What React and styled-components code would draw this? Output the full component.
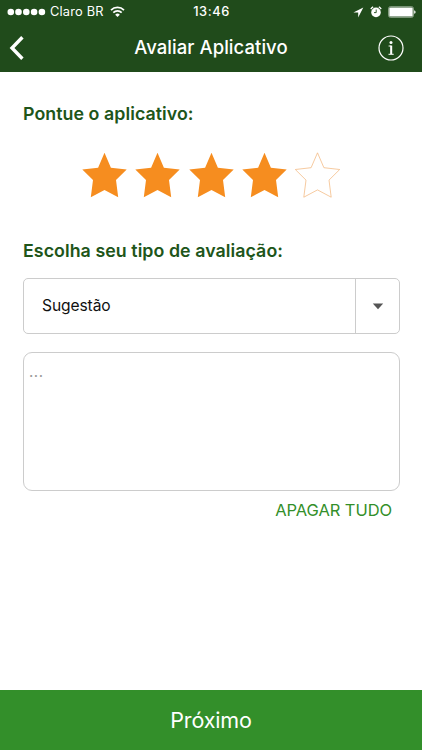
import React, { useState } from 'react';
import styled, { createGlobalStyle } from 'styled-components';

const GlobalStyle = createGlobalStyle`
  * {
    box-sizing: border-box;
  }

  body {
    margin: 0;
    background-color: #ffffff;
    font-family: Inter, 'Liberation Sans', sans-serif;
  }

  button {
    border: none;
    padding: 0;
    background: none;
    font-family: inherit;
  }
`;

const Screen = styled.div`
  width: 422px;
  height: 750px;
  display: flex;
  flex-direction: column;
  background-color: #ffffff;
  overflow: hidden;
`;

const Header = styled.header`
  height: 72px;
  flex-shrink: 0;
  background-color: #204b1b;
  color: #ffffff;
`;

const StatusBar = styled.div`
  height: 24px;
  display: grid;
  grid-template-columns: 1fr auto 1fr;
  align-items: center;
  padding: 0 6px 0 7px;
  line-height: 24px;
`;

const StatusSide = styled.div`
  display: flex;
  align-items: center;
  justify-content: ${({ $end }) => ($end ? 'flex-end' : 'flex-start')};
  gap: ${({ $end }) => ($end ? '6px' : '4px')};

  svg {
    display: block;
    flex-shrink: 0;
  }
`;

const Carrier = styled.span`
  margin-right: 2px;
  font-size: 12.8px;
  letter-spacing: 0.2px;
  white-space: nowrap;
`;

const Clock = styled.span`
  font-size: 12.8px;
  font-weight: 500;
  letter-spacing: 0.6px;
`;

const NavBar = styled.div`
  height: 47px;
  display: grid;
  grid-template-columns: 60px 1fr 60px;
  align-items: center;
  text-align: center;

  h1 {
    margin: 0;
    font-size: 18.5px;
    font-weight: 500;
    line-height: 47px;
    letter-spacing: 0.05px;
    white-space: nowrap;
  }
`;

const NavButton = styled.button`
  height: 47px;
  display: flex;
  align-items: center;
  justify-content: ${({ $end }) => ($end ? 'flex-end' : 'flex-start')};
  padding: ${({ $end }) => ($end ? '0 18px 0 0' : '0 0 0 9px')};
  color: #ffffff;
`;

const Content = styled.main`
  flex: 1;
  padding: 30px 22px 0 23px;
`;

const Label = styled.h2`
  margin: 0;
  font-size: 17.8px;
  font-weight: 600;
  line-height: 24px;
  letter-spacing: 0.06px;
  color: #205519;
  white-space: nowrap;
`;

const Stars = styled.div`
  display: flex;
  justify-content: center;
  gap: 8.3px;
  margin: 26px 1px 41px 0;

  button,
  svg {
    display: block;
  }
`;

const Select = styled.div`
  height: 56px;
  display: flex;
  margin-top: 15px;
  border: 1px solid #cccccc;
  border-radius: 5px;
`;

const SelectValue = styled.div`
  flex: 1;
  padding-left: 18px;
  font-size: 15.6px;
  line-height: 53px;
  letter-spacing: -0.1px;
  color: #111111;
`;

const SelectArrow = styled.button`
  width: 44px;
  display: flex;
  align-items: center;
  justify-content: center;
  border-left: 1px solid #cccccc;
`;

const Comment = styled.textarea`
  width: 100%;
  height: 139px;
  display: block;
  margin-top: 18px;
  padding: 9px 5px;
  border: 1px solid #cccccc;
  border-radius: 9px;
  outline: none;
  resize: none;
  background-color: #ffffff;
  font-family: inherit;
  font-size: 15px;
  line-height: 20px;

  &::placeholder {
    color: #999999;
    letter-spacing: 0.5px;
    opacity: 1;
  }
`;

const ClearButton = styled.button`
  display: block;
  margin: 7px 8px 0 auto;
  font-size: 16.5px;
  line-height: 24px;
  letter-spacing: -0.08px;
  color: #338f2a;
  white-space: nowrap;
`;

const NextButton = styled.button`
  height: 60px;
  flex-shrink: 0;
  background-color: #338f2a;
  font-size: 21.5px;
  line-height: 60px;
  letter-spacing: -0.15px;
  color: #ffffff;
`;

const Signal = () => (
  <svg width='39' height='8' viewBox='0 0 39 8' fill='#ffffff'>
    {[3.8, 11.5, 19.3, 27.1, 34.9].map((x) => (
      <circle key={x} cx={x} cy='4' r='3.3' />
    ))}
  </svg>
);

const Wifi = () => (
  <svg width='15' height='12' viewBox='0 0 15 12' fill='none' stroke='#ffffff' strokeWidth='1.7'>
    <path d='M1 4.1A9.2 9.2 0 0 1 14 4.1' />
    <path d='M3.3 6.6A5.9 5.9 0 0 1 11.7 6.6' />
    <path d='M5.2 8.7a3.25 3.25 0 0 1 4.6 0L7.5 11z' fill='#ffffff' stroke='none' />
  </svg>
);

const Location = () => (
  <svg width='11' height='11' viewBox='0 0 11 11' fill='#ffffff'>
    <path d='M10.3 0.5L0.4 5.5h4.8v5z' />
  </svg>
);

const Alarm = () => (
  <svg width='12' height='12' viewBox='0 0 12 12'>
    <circle cx='6' cy='6.4' r='4.8' fill='#ffffff' />
    <path d='M0.8 3.1A7 7 0 0 1 3.2 0.9M11.2 3.1A7 7 0 0 0 8.8 0.9' fill='none' stroke='#ffffff' strokeWidth='1.3' />
    <path d='M6.2 3.5v3.1H4' fill='none' stroke='#204b1b' strokeWidth='0.9' />
  </svg>
);

const Battery = () => (
  <svg width='28' height='12' viewBox='0 0 28 12'>
    <rect x='0.5' y='0.6' width='25' height='10.8' rx='2' fill='none' stroke='#c9d5c7' strokeWidth='0.6' />
    <rect x='1.3' y='1.4' width='23.4' height='9.2' rx='1.2' fill='#ffffff' />
    <path d='M26.2 4.2q1.4 0.4 1.4 1.8t-1.4 1.8z' fill='#ffffff' />
  </svg>
);

const Back = () => (
  <svg width='16' height='26' viewBox='0 0 16 26' fill='none' stroke='#ffffff' strokeWidth='3.4'>
    <path d='M13.4 2.3L3 13L13.4 23.7' />
  </svg>
);

const Info = () => (
  <svg width='26' height='26' viewBox='0 0 26 26' fill='none' stroke='#ffffff'>
    <circle cx='13' cy='13' r='12' strokeWidth='1.2' />
    <circle cx='13' cy='7.6' r='1.5' fill='#ffffff' stroke='none' />
    <path d='M10.6 11h2.7v8' strokeWidth='1' />
    <path d='M13.2 10.6v8.4' strokeWidth='2' />
    <path d='M10.5 19.3h5.2' strokeWidth='1' />
  </svg>
);

const Star = ({ filled }) => (
  <svg width='45' height='46' viewBox='-22.5 -0.5 45 46'>
    <path
      d='M0 0.3L6.4 15.2L22.2 17L11.5 27.6L13.7 44.7L0 37.4L-13.7 44.7L-11.5 27.6L-22.2 17L-6.4 15.2z'
      fill={filled ? '#f68d1f' : 'none'}
      stroke={filled ? 'none' : '#f2b377'}
      strokeWidth='0.7'
    />
  </svg>
);

const App = () => {
  const [rating, setRating] = useState(4);
  const [comment, setComment] = useState('');

  return (
    <>
      <GlobalStyle />
      <Screen>
        <Header>
          <StatusBar>
            <StatusSide>
              <Signal />
              <Carrier>Claro BR</Carrier>
              <Wifi />
            </StatusSide>
            <Clock>13:46</Clock>
            <StatusSide $end>
              <Location />
              <Alarm />
              <Battery />
            </StatusSide>
          </StatusBar>
          <NavBar>
            <NavButton aria-label='Voltar'>
              <Back />
            </NavButton>
            <h1>Avaliar Aplicativo</h1>
            <NavButton $end aria-label='Info'>
              <Info />
            </NavButton>
          </NavBar>
        </Header>
        <Content>
          <Label>Pontue o aplicativo:</Label>
          <Stars>
            {[1, 2, 3, 4, 5].map((value) => (
              <button key={value} onClick={() => setRating(value)}>
                <Star filled={value <= rating} />
              </button>
            ))}
          </Stars>
          <Label>Escolha seu tipo de avaliação:</Label>
          <Select>
            <SelectValue>Sugestão</SelectValue>
            <SelectArrow>
              <svg width='12' height='7' viewBox='0 0 12 7'>
                <path d='M0.8 0.5h10.4L6 6.3z' fill='#555555' />
              </svg>
            </SelectArrow>
          </Select>
          <Comment
            placeholder='...'
            value={comment}
            onChange={(e) => setComment(e.target.value)}
          />
          <ClearButton onClick={() => setComment('')}>APAGAR TUDO</ClearButton>
        </Content>
        <NextButton>Próximo</NextButton>
      </Screen>
    </>
  );
};

export default App;
